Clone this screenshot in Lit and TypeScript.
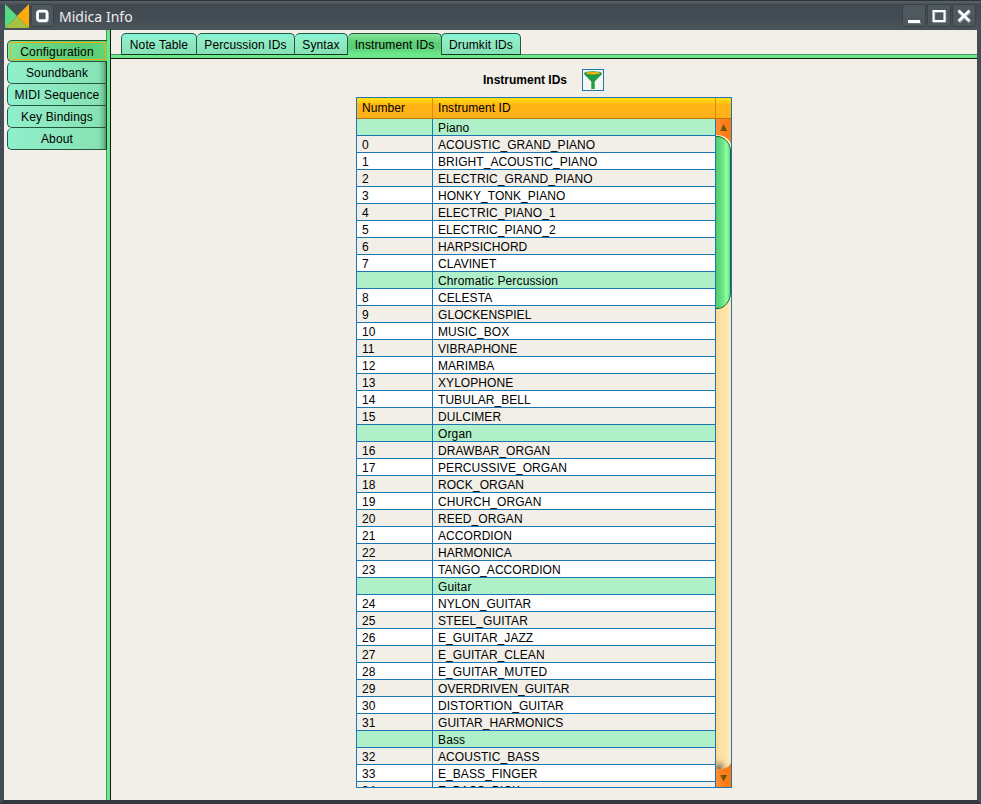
import { LitElement, html, css, svg } from "lit";
import { customElement, property, state } from "lit/decorators.js";
import { classMap } from "lit/directives/class-map.js";

interface Group {
  name: string;
  items: string[];
}

const GROUPS: Group[] = [
  { name: "Piano", items: ["ACOUSTIC_GRAND_PIANO", "BRIGHT_ACOUSTIC_PIANO", "ELECTRIC_GRAND_PIANO", "HONKY_TONK_PIANO", "ELECTRIC_PIANO_1", "ELECTRIC_PIANO_2", "HARPSICHORD", "CLAVINET"] },
  { name: "Chromatic Percussion", items: ["CELESTA", "GLOCKENSPIEL", "MUSIC_BOX", "VIBRAPHONE", "MARIMBA", "XYLOPHONE", "TUBULAR_BELL", "DULCIMER"] },
  { name: "Organ", items: ["DRAWBAR_ORGAN", "PERCUSSIVE_ORGAN", "ROCK_ORGAN", "CHURCH_ORGAN", "REED_ORGAN", "ACCORDION", "HARMONICA", "TANGO_ACCORDION"] },
  { name: "Guitar", items: ["NYLON_GUITAR", "STEEL_GUITAR", "E_GUITAR_JAZZ", "E_GUITAR_CLEAN", "E_GUITAR_MUTED", "OVERDRIVEN_GUITAR", "DISTORTION_GUITAR", "GUITAR_HARMONICS"] },
  { name: "Bass", items: ["ACOUSTIC_BASS", "E_BASS_FINGER", "E_BASS_PICK"] },
];

interface Row {
  num: string;
  label: string;
  group: boolean;
}

const ROWS: Row[] = [];
GROUPS.reduce((n, g) => {
  ROWS.push({ num: "", label: g.name, group: true });
  g.items.forEach((label, i) => ROWS.push({ num: String(n + i), label, group: false }));
  return n + g.items.length;
}, 0);

@customElement("title-bar")
class TitleBar extends LitElement {
  @property() label = "";

  static styles = css`
    :host {
      display: flex;
      height: 30px;
      box-sizing: border-box;
      padding: 4px 5px 0 5px;
      background: linear-gradient(#2e343a 0, #2e343a 1px, #5a636a 1px, #4f585f 3px, #424a51 5px, #454d54 18px, #4b545b 29px, #454d53 30px);
      font: 14px/25px "Noto Sans", sans-serif;
      color: #eceeef;
    }
    svg { display: block; flex: none; }
    .menu { margin-left: 2px; }
    .title { flex: 1; padding-left: 5px; letter-spacing: 0.02px; }
    .buttons { display: flex; gap: 1px; }
  `;

  private button(shape: unknown) {
    return html`<svg width="24" height="24" viewBox="0 0 24 24">
      <rect x="0.5" y="0.5" width="23" height="22" rx="2" fill="#4e585f" stroke="#3a4248" />
      ${shape}
    </svg>`;
  }

  render() {
    return html`
      <svg width="24" height="24" viewBox="0 0 24 24">
        <path d="M0 0L12 12L0 24Z" fill="#55dc87" />
        <path d="M24 0L12 12L24 24Z" fill="#ffac0a" />
        <path d="M12 12L24 24H0Z" fill="#a5c341" />
      </svg>
      <svg class="menu" width="23" height="24" viewBox="0 0 23 24">
        <rect x="0.5" y="0.5" width="22" height="22" rx="2" fill="#4e585f" stroke="#3a4248" />
        <rect x="6.500" y="7.500" width="10.500" height="10.500" rx="2.500" fill="none" stroke="#7c8388" stroke-width="2" />
        <rect x="6.500" y="7.200" width="9.500" height="9.500" rx="2" fill="none" stroke="#fff" stroke-width="2.800" />
      </svg>
      <div class="title">${this.label}</div>
      <div class="buttons">
        ${this.button(svg`<path d="M7 18.500H19" stroke="#8b9297" stroke-width="2"/><path d="M6 17.500H18" stroke="#fff" stroke-width="3"/>`)}
        ${this.button(svg`<rect x="7" y="7.500" width="11" height="10" fill="none" stroke="#939a9e" stroke-width="2.500"/><rect x="6.500" y="7" width="11" height="10" fill="none" stroke="#fff" stroke-width="2"/>`)}
        ${this.button(svg`<path d="M7 7.500L18 18M18 7.500L7 18" stroke="#8f969a" stroke-width="3.500"/><path d="M6.500 6.500L17.500 17M17.500 6.500L6.500 17" stroke="#fff" stroke-width="2.700"/>`)}
      </div>
    `;
  }
}

@customElement("table-scrollbar")
class TableScrollbar extends LitElement {
  static styles = css`
    :host { display: block; width: 15px; height: 668px; }
    svg { display: block; }
  `;

  render() {
    return html`<svg width="15" height="668" viewBox="0 0 15 668">
      <defs>
        <linearGradient id="track"><stop offset="0" stop-color="#fbd993" /><stop offset=".5" stop-color="#fee3a9" /><stop offset="1" stop-color="#ffe9b4" /></linearGradient>
        <linearGradient id="thumb"><stop offset="0" stop-color="#48b960" /><stop offset=".12" stop-color="#55cf70" /><stop offset=".5" stop-color="#69e584" /><stop offset=".75" stop-color="#92ffa4" /><stop offset="1" stop-color="#5fd878" /></linearGradient>
        <linearGradient id="arrow"><stop offset="0" stop-color="#ff9136" /><stop offset=".5" stop-color="#ff7c18" /><stop offset="1" stop-color="#ff7a10" /></linearGradient>
        <linearGradient id="mark"><stop offset="0" stop-color="#a85a08" /><stop offset="1" stop-color="#354f10" /></linearGradient>
        <radialGradient id="shade" cx="3" cy="649" r="11" gradientUnits="userSpaceOnUse"><stop offset="0" stop-color="#80765d" /><stop offset="1" stop-color="#e9cd93" stop-opacity="0" /></radialGradient>
      </defs>
      <rect width="15" height="668" fill="url(#track)" />
      <path d="M0 0H15V26C14 20 8 17 0 17Z" fill="url(#arrow)" />
      <path d="M0 17C8 17 14 21 15 30" fill="none" stroke="#fff0c5" stroke-width="2" />
      <path d="M-1 17.500H2C9 18 14.500 25 14.500 32V174C14.500 181 9 189.500 2 189.500H-1Z" fill="url(#thumb)" stroke="#17652c" />
      <path d="M4 12L7.500 5L11 12Z" fill="url(#mark)" />
      <rect y="636" width="15" height="16" fill="url(#shade)" />
      <path d="M0 650C8 651 14 648 15 643V668H0Z" fill="url(#arrow)" />
      <path d="M4 656H11L7.500 662.500Z" fill="url(#mark)" />
    </svg>`;
  }
}

@customElement("instrument-table")
class InstrumentTable extends LitElement {
  static styles = css`
    :host {
      display: block;
      width: 374px;
      height: 689px;
      border: 1px solid #1c76b4;
      font: 12px/16px "Liberation Sans", Arial, sans-serif;
      color: #000;
    }
    .head {
      display: grid;
      grid-template-columns: 75px 282px 1fr;
      column-gap: 1px;
      height: 20px;
      line-height: 21px;
      border-bottom: 1px solid #bd750c;
      background: linear-gradient(#ffde12 0, #ffd812 2px, #ffb414 7px, #ffb018 20px);
    }
    .head div { height: 20px; padding-left: 5px; box-shadow: 1px 0 #df8910; letter-spacing: 0.05px; }
    .head div:last-child { box-shadow: none; }
    .body { display: flex; }
    .rows { width: 358px; height: 668px; overflow: hidden; border-right: 1px solid #1c76b4; }
    .row { display: grid; grid-template-columns: 75px 1fr; height: 16px; border-bottom: 1px solid #1c76b4; background: #f2efe8; letter-spacing: 0.06px; }
    .row.even { background: #fff; }
    .row.group { background: #b0f0c8; letter-spacing: 0.14px; }
    .row div { padding-left: 5px; line-height: 18px; height: 16px; white-space: nowrap; }
    .row div + div { border-left: 1px solid #1c76b4; }
  `;

  render() {
    return html`
      <div class="head"><div>Number</div><div>Instrument ID</div><div></div></div>
      <div class="body">
        <div class="rows">
          ${ROWS.map((r, i) => html`<div class=${classMap({ row: true, even: i % 2 === 0, group: r.group })}>
            <div>${r.num}</div><div>${r.label}</div>
          </div>`)}
        </div>
        <table-scrollbar></table-scrollbar>
      </div>
    `;
  }
}

const SECTIONS = ["Configuration", "Soundbank", "MIDI Sequence", "Key Bindings", "About"];
const TABS = [
  { label: "Note Table", width: 76 },
  { label: "Percussion IDs", width: 98 },
  { label: "Syntax", width: 53 },
  { label: "Instrument IDs", width: 94 },
  { label: "Drumkit IDs", width: 79 },
];

@customElement("app-root")
class AppRoot extends LitElement {
  @state() private section = 0;
  @state() private tab = 3;

  static styles = css`
    :host {
      display: block;
      box-sizing: border-box;
      width: 981px;
      height: 804px;
      overflow: hidden;
      background: #2b3136;
      font: 12px/16px "Liberation Sans", Arial, sans-serif;
      color: #000;
    }
    .frame {
      display: flex;
      box-sizing: border-box;
      height: 774px;
      border: solid #454d54;
      border-width: 0 4px 4px 4px;
      border-bottom-color: #31383e;
      background: #f2efe8;
    }
    .side {
      flex: none;
      box-sizing: border-box;
      width: 107px;
      padding: 10px 4px 0 3px;
      background: linear-gradient(90deg, #f2efe8 102px, #4b925e 102px, #4b925e 103px, #6be88a 103px, #6be88a 106px, #10180f 106px);
    }
    .section {
      box-sizing: border-box;
      height: 22px;
      border: 1px solid #23583f;
      border-top: 0;
      border-right-color: #123c28;
      border-radius: 5px 0 0 5px;
      text-align: center;
      line-height: 23px;
      letter-spacing: 0.16px;
      background: linear-gradient(90deg, #7ff5d5 0, #91edc9 7px, #87e3b4 90px, #71c69b 95px, #4d9270 100%);
    }
    .section.active {
      padding: 1px 0 1px 2px;
      border-top: 1px solid #174f28;
      border-right: 0;
      background: linear-gradient(90deg, #7ee79c 0, #6fd987 20px, #59cb73 75px, #62d47c 100%);
    }
    .ring { box-sizing: border-box; height: 18px; margin-right: 1px; padding-right: 2px; border: 1px solid #f7ac08; border-radius: 2px; line-height: 18px; }
    .main { flex: 1; min-width: 0; display: flex; flex-direction: column; }
    .tabs {
      display: flex;
      box-sizing: border-box;
      height: 29px;
      padding: 3px 0 0 10px;
      background: linear-gradient(#f2efe8 24px, #4b925e 24px, #4b925e 25px, #6be88a 25px, #6be88a 28px, #10180f 28px);
    }
    .tab {
      box-sizing: border-box;
      height: 22px;
      border: 1px solid #23583f;
      border-left-width: 0;
      border-bottom-color: #0f3a23;
      border-radius: 5px 5px 0 0;
      text-align: center;
      line-height: 22px;
      letter-spacing: 0.12px;
      white-space: nowrap;
      background: linear-gradient(#83f5d7 0, #91edc8 6px, #86e1b2 100%);
    }
    .tab:first-child { border-left-width: 1px; }
    .tab.active { background: linear-gradient(#85e79d 0, #5dce76 9px, #5bcb74 13px, #6be88a 100%); border-bottom-color: #6be88a; }
    .tab.active + .tab { border-left-width: 1px; margin-left: -1px; }
    .content { display: flex; flex-direction: column; padding: 10px 0 0 245px; }
    .heading { display: flex; align-items: center; height: 22px; padding-left: 127px; margin-bottom: 6px; gap: 15px; font-weight: bold; }
    .filter { box-sizing: border-box; width: 22px; height: 22px; border: 1px solid #1c76b4; background: #f7f5ef; }
    .filter svg { display: block; }
  `;

  render() {
    return html`
      <title-bar label="Midica Info"></title-bar>
      <div class="frame">
        <div class="side">
          ${SECTIONS.map((s, i) => html`<div class=${classMap({ section: true, active: i === this.section })} @click=${() => (this.section = i)}>
            ${i === this.section ? html`<div class="ring">${s}</div>` : s}
          </div>`)}
        </div>
        <div class="main">
          <div class="tabs">
            ${TABS.map((t, i) => html`<div class=${classMap({ tab: true, active: i === this.tab })} style="width:${t.width + (i === this.tab + 1 ? 1 : 0)}px" @click=${() => (this.tab = i)}>${t.label}</div>`)}
          </div>
          <div class="content">
            <div class="heading">
              <span>Instrument IDs</span>
              <div class="filter">
                <svg width="20" height="20" viewBox="0 0 20 20">
                  <path d="M1 3C1 5 4 7 8.300 11.500V19H11.700V11.500C16 7 19 5 19 3Z" fill="#219b48" />
                  <ellipse cx="10" cy="3.200" rx="9" ry="2" fill="#219b48" />
                  <ellipse cx="10" cy="3.200" rx="7.200" ry="1.300" fill="#ffaf0b" />
                </svg>
              </div>
            </div>
            <instrument-table></instrument-table>
          </div>
        </div>
      </div>
    `;
  }
}
